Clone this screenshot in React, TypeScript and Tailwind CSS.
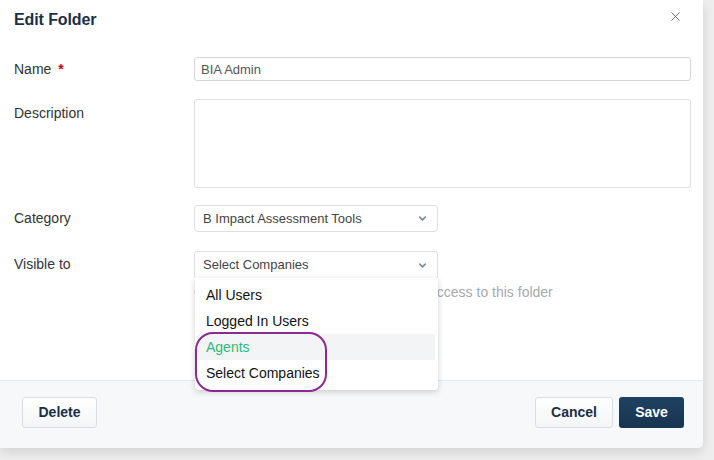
import { X, ChevronDown } from 'lucide-react';

const font = { fontFamily: '"Liberation Sans", Arial, sans-serif' };

const options = ['All Users', 'Logged In Users', 'Agents', 'Select Companies'];

function Select({ value, open }: { value: string; open?: boolean }) {
  return (
    <div
      className={
        'w-[244px] h-[27px] flex items-center justify-between pl-[8px] pr-[9px] border border-[#dcdfe3] bg-white text-[13px] text-[#444] ' +
        (open ? 'rounded-t-[4px] border-b-0' : 'rounded-[4px]')
      }
    >
      <span>{value}</span>
      <ChevronDown className="w-[11px] h-[11px] text-[#7d8a97]" strokeWidth={3.5} />
    </div>
  );
}

export default function App() {
  return (
    <div className="w-[714px] h-[460px] bg-[#eeeeee] overflow-hidden" style={font}>
      <div className="w-[703px] h-[448px] bg-white rounded-br-[5px] shadow-[0_4px_12px_rgba(0,0,0,0.12)] flex flex-col">
        <div className="h-[40px] shrink-0 flex items-center justify-between pl-[14px] pr-[20px]">
          <h1 className="text-[16px] font-bold text-[#1d2f44] tracking-[-0.1px]">Edit Folder</h1>
          <X className="w-[15px] h-[15px] text-[#5f646b] -mt-[8px]" strokeWidth={1.5} />
        </div>

        <div className="flex-1 pl-[14px] pr-[12px] pt-[17px]">
          <div className="grid grid-cols-[180px_1fr] items-center">
            <label className="text-[14px] text-[#333]">
              Name <span className="text-[#d0021b] font-bold ml-[3px]">*</span>
            </label>
            <input
              readOnly
              value="BIA Admin"
              className="h-[24px] w-full border border-[#d3d6da] rounded-[3px] px-[6px] text-[13px] text-[#555] outline-none"
              style={font}
            />
          </div>

          <div className="grid grid-cols-[180px_1fr] mt-[18px]">
            <label className="text-[14px] text-[#333] pt-[4px]">Description</label>
            <div className="h-[89px] border border-[#dcdfe3] rounded-[3px]" />
          </div>

          <div className="grid grid-cols-[180px_1fr] items-center mt-[17px]">
            <label className="text-[14px] text-[#333]">Category</label>
            <Select value="B Impact Assessment Tools" />
          </div>

          <div className="grid grid-cols-[180px_1fr] mt-[19px]">
            <label className="text-[14px] text-[#333] pt-[3px]">Visible to</label>
            <div className="relative">
              <Select value="Select Companies" open />
              <p className="mt-[4px] text-[14px] text-[#a7aaad]">Choose the companies that can have access to this folder</p>

              <div className="absolute left-[1px] top-[27px] w-[243px] bg-white rounded-b-[4px] shadow-[0_2px_6px_rgba(0,0,0,0.18)] px-[3px] py-[4px] z-10">
                {options.map(o => (
                  <div
                    key={o}
                    className={
                      'h-[26px] flex items-center pl-[8px] text-[14px] ' +
                      (o === 'Agents' ? 'bg-[#f3f4f6] text-[#2dba77]' : 'text-[#111]')
                    }
                  >
                    {o}
                  </div>
                ))}
              </div>

              <div className="absolute left-[1px] top-[81px] w-[132px] h-[60px] border-[2.5px] border-[#8c2b8f] rounded-[18px] z-20 pointer-events-none" />
            </div>
          </div>
        </div>

        <div className="h-[68px] shrink-0 border-t border-[#e6e8eb] bg-[#f7f8fa] rounded-br-[5px] flex items-center justify-between pl-[22px] pr-[19px] pb-[4px]">
          <button className="h-[31px] w-[75px] border border-[#dadde1] rounded-[3px] bg-gradient-to-b from-white to-[#f4f5f7] text-[14px] font-semibold text-[#1d2f44]">
            Delete
          </button>
          <div className="flex gap-[6px]">
            <button className="h-[31px] w-[78px] border border-[#dadde1] rounded-[3px] bg-gradient-to-b from-white to-[#f4f5f7] text-[14px] font-semibold text-[#1d2f44]">
              Cancel
            </button>
            <button className="h-[31px] w-[65px] rounded-[3px] bg-gradient-to-b from-[#1f4262] to-[#173450] text-[14px] font-bold text-white">
              Save
            </button>
          </div>
        </div>
      </div>
    </div>
  );
}
